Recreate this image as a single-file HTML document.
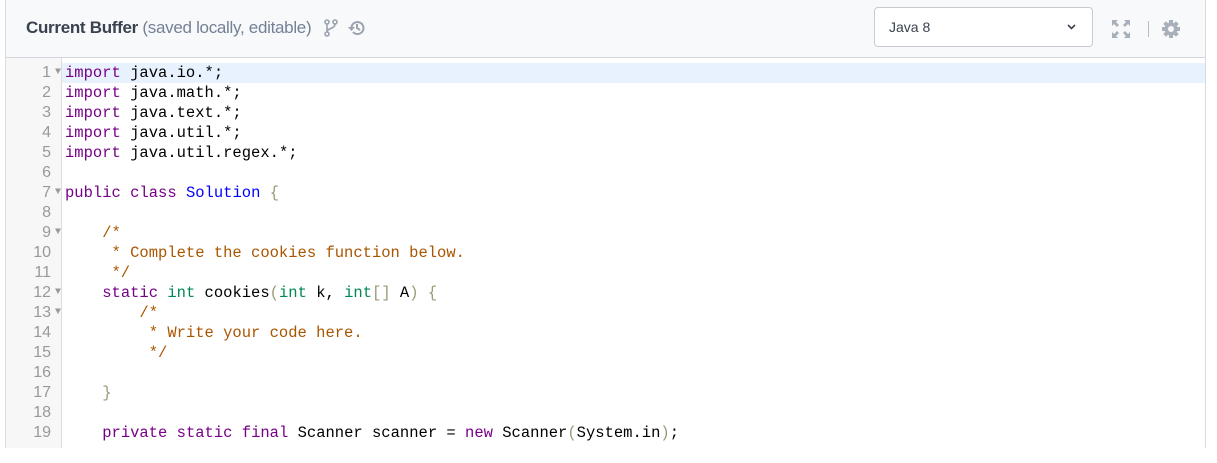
<!DOCTYPE html>
<html><head><style>
body{margin:0;width:1217px;height:448px;overflow:hidden;background:#fff;font-family:"Liberation Sans",sans-serif}
.wrap{position:absolute;left:5px;top:0;width:1199px;height:448px;border-left:1px solid #d8dbe0;border-right:1px solid #d8dbe0}
.hdr{position:absolute;left:0;top:0;width:1199px;height:57px;background:#f8f9fb;border-bottom:1px solid #d2d6dc}
.title{position:absolute;left:20px;top:18px;font-size:17px;color:#39424e;letter-spacing:-0.3px}
.title b{font-weight:600}
.title span{color:#738195}
.sel{position:absolute;left:868px;top:7px;width:217px;height:38px;border:1px solid #c8ccd2;border-radius:4px;background:#fff;font-size:14px;color:#39424e}
.sel .t{position:absolute;left:14px;top:11px}
.gut{position:absolute;left:0;top:58px;width:55px;height:390px;background:#f7f7f7;border-right:1px solid #ddd}
.hl{position:absolute;left:56px;top:63px;width:1143px;height:20px;background:#e8f2ff}
.code{position:absolute;left:0;top:63px;font-family:"Liberation Mono",monospace;font-size:15.5px;line-height:20px;white-space:pre}
.ln{position:absolute;left:0;width:45px;text-align:right;color:#999;font-family:"Liberation Sans",sans-serif;font-size:16px}
.fd{position:absolute;left:49px;color:#999;font-size:10px}
.tx{position:absolute;left:59px;color:#000}
.k{color:#708}.ty{color:#085}.d{color:#00f}.c{color:#a50}.p{color:#997}
</style></head><body>
<div class="wrap">
<div class="hdr">
<div class="title"><b>Current Buffer</b> <span>(saved locally, editable)</span></div>
<svg style="position:absolute;left:318px;top:19px" width="14" height="18" viewBox="0 0 14 18"><g fill="none" stroke="#9aa3af" stroke-width="1.6"><circle cx="3" cy="3" r="2"/><circle cx="11" cy="3" r="2"/><circle cx="3" cy="15" r="2"/><path d="M3 5v8M11 5c0 5-8 4-8 8"/></g></svg>
<svg style="position:absolute;left:342px;top:19px" width="18" height="18" viewBox="0 0 18 18"><g fill="none" stroke="#9aa3af" stroke-width="2"><path d="M3.5 9A6 6 0 1 1 5 13"/><path d="M9 5v4l3 2"/></g><path d="M0 8h7l-3.5 4z" fill="#9aa3af"/></svg>
<div class="sel"><span class="t">Java 8</span><svg style="position:absolute;right:16px;top:16px" width="9" height="6"><path d="M1 1l3.5 3.5L8 1" stroke="#39424e" stroke-width="1.6" fill="none"/></svg></div>
<svg style="position:absolute;left:1106px;top:20px" width="18" height="18" viewBox="0 0 18 18" fill="#a8b0ba"><path d="M0 0h6L4 2l3 3-2 2-3-3-2 2zM18 0v6l-2-2-3 3-2-2 3-3-2-2zM0 18v-6l2 2 3-3 2 2-3 3 2 2zM18 18h-6l2-2-3-3 2-2 3 3 2-2z"/></svg>
<div style="position:absolute;left:1142px;top:21px;width:1px;height:16px;background:#b5bcc5"></div>
<svg style="position:absolute;left:1155px;top:19px" width="20" height="20" viewBox="0 0 20 20"><g fill="#a8b0ba"><circle cx="10" cy="10" r="6.5"/><g><rect x="8" y="1" width="4" height="18"/><rect x="1" y="8" width="18" height="4"/><rect x="8" y="1" width="4" height="18" transform="rotate(45 10 10)"/><rect x="8" y="1" width="4" height="18" transform="rotate(-45 10 10)"/></g></g><circle cx="10" cy="10" r="3" fill="#f8f9fb"/></svg>
</div>
<div class="gut"></div>
<div class="hl"></div>
<div class="code">
<div class="ln" style="top:0">1</div><div class="fd" style="top:0">▼</div><div class="tx" style="top:0"><span class="k">import</span> java.io.*;</div>
<div class="ln" style="top:20px">2</div><div class="tx" style="top:20px"><span class="k">import</span> java.math.*;</div>
<div class="ln" style="top:40px">3</div><div class="tx" style="top:40px"><span class="k">import</span> java.text.*;</div>
<div class="ln" style="top:60px">4</div><div class="tx" style="top:60px"><span class="k">import</span> java.util.*;</div>
<div class="ln" style="top:80px">5</div><div class="tx" style="top:80px"><span class="k">import</span> java.util.regex.*;</div>
<div class="ln" style="top:100px">6</div>
<div class="ln" style="top:120px">7</div><div class="fd" style="top:120px">▼</div><div class="tx" style="top:120px"><span class="k">public</span> <span class="k">class</span> <span class="d">Solution</span> <span class="p">{</span></div>
<div class="ln" style="top:140px">8</div>
<div class="ln" style="top:160px">9</div><div class="fd" style="top:160px">▼</div><div class="tx c" style="top:160px">    /*</div>
<div class="ln" style="top:180px">10</div><div class="tx c" style="top:180px">     * Complete the cookies function below.</div>
<div class="ln" style="top:200px">11</div><div class="tx c" style="top:200px">     */</div>
<div class="ln" style="top:220px">12</div><div class="fd" style="top:220px">▼</div><div class="tx" style="top:220px">    <span class="k">static</span> <span class="ty">int</span> cookies<span class="p">(</span><span class="ty">int</span> k, <span class="ty">int</span><span class="p">[]</span> A<span class="p">)</span> <span class="p">{</span></div>
<div class="ln" style="top:240px">13</div><div class="fd" style="top:240px">▼</div><div class="tx c" style="top:240px">        /*</div>
<div class="ln" style="top:260px">14</div><div class="tx c" style="top:260px">         * Write your code here.</div>
<div class="ln" style="top:280px">15</div><div class="tx c" style="top:280px">         */</div>
<div class="ln" style="top:300px">16</div>
<div class="ln" style="top:320px">17</div><div class="tx" style="top:320px">    <span class="p">}</span></div>
<div class="ln" style="top:340px">18</div>
<div class="ln" style="top:360px">19</div><div class="tx" style="top:360px">    <span class="k">private</span> <span class="k">static</span> <span class="k">final</span> Scanner scanner = <span class="k">new</span> Scanner<span class="p">(</span>System.in<span class="p">)</span>;</div>
</div>
</div>
</body></html>
